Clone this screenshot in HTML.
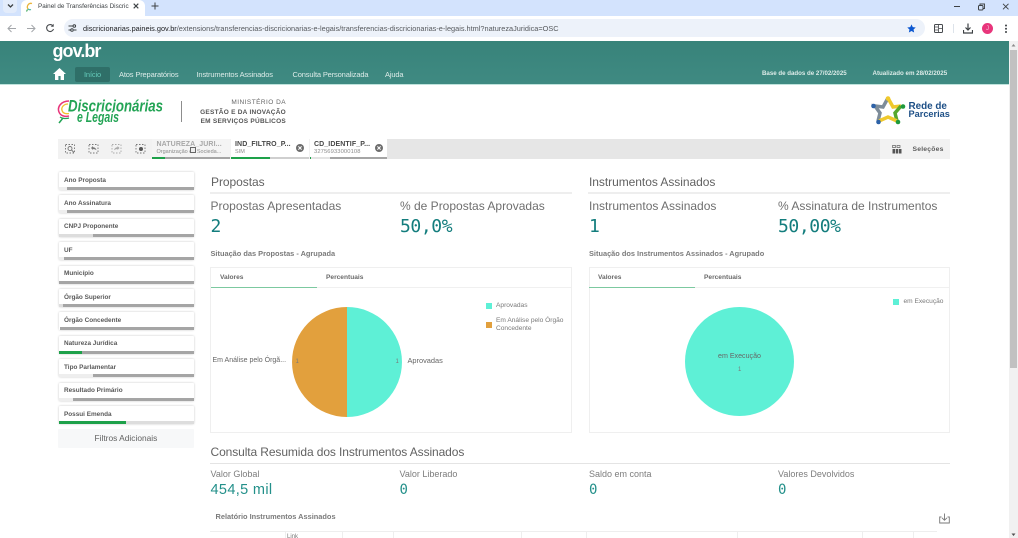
<!DOCTYPE html>
<html lang="pt-BR"><head><meta charset="utf-8"><title>Painel de Transferências Discricionárias</title>
<style>
html,body{margin:0;padding:0;background:#fff}
#p{position:relative;width:1018px;height:538px;overflow:hidden;background:#fff;font-family:"Liberation Sans",sans-serif}
#p div{position:absolute}
.t{position:absolute;white-space:nowrap;line-height:12px}
.nav{top:68.500px;color:#dcebe8;font-size:7.500px;letter-spacing:-.15px}
.fl{left:59px;width:134.500px;height:18px;background:#fff;box-shadow:0 0 2px rgba(0,0,0,.22);border-radius:1px}
.fl b{position:absolute;left:5px;top:2.500px;font-size:6.400px;line-height:11px;color:#595959;white-space:nowrap}
.bar{position:absolute;left:0;bottom:0;height:3px;width:100%;overflow:hidden}
.bar i{position:absolute;top:0;bottom:0;display:block}
.h2{font-size:12px;color:#626262;letter-spacing:-.05px;line-height:14px}
.hr{height:2px;background:#eee}
.kl{font-size:12px;color:#6f6f6f;line-height:14px}
.kv{font-family:"DejaVu Sans Mono",monospace;font-size:18px;letter-spacing:-.4px;color:#137d7d;line-height:24px}
.sub{font-size:7.400px;font-weight:bold;color:#7b7b7b;line-height:10px}
.panel{box-sizing:border-box;border:1px solid #efefef;background:#fff}
.tab{font-size:6.600px;font-weight:bold;color:#6a6a6a;line-height:10px}
.sm{font-size:6.600px;color:#7a7a7a;line-height:10px}
.vl{font-size:9px;color:#7d7d7d;line-height:12px}
.vv{font-family:"DejaVu Sans Mono",monospace;font-size:14px;color:#23908a;line-height:18px}
.vline{top:531px;height:7px;width:1px;background:#eee}
.ct{font-size:7px;font-weight:bold;color:#484848;letter-spacing:.1px;line-height:10px}
.cb{font-size:5.500px;color:#8a8a8a;line-height:8px}
</style></head><body><div id="p">

<!-- browser chrome -->
<div style="left:0;top:0;width:1018px;height:16px;background:#d3e3fd"></div>
<div style="left:3px;top:0;width:14px;height:13px;background:#e3ecfb;border-radius:0 0 4px 4px"></div>
<svg style="position:absolute;left:7px;top:3px" width="7" height="6" viewBox="0 0 7 6"><path d="M1 1.500 3.500 4 6 1.500" fill="none" stroke="#3c4043" stroke-width="1.300"/></svg>
<div style="left:21px;top:0;width:124px;height:17px;background:#fff;border-radius:6px 6px 0 0"></div>
<svg style="position:absolute;left:25px;top:2px" width="9" height="10" viewBox="0 0 9 10"><path d="M7 1.500A3.600 3.600 0 0 0 3 7" fill="none" stroke="#e9b53c" stroke-width="1.300"/><path d="M3 7A3 3 0 0 0 6 7.500" fill="none" stroke="#4db6a2" stroke-width="1.200"/><path d="M2.500 7.500 1.500 9.500" stroke="#45a860" stroke-width="1.200"/></svg>
<span class="t" style="left:38px;top:.500px;font-size:6.350px;color:#3c4043">Painel de Transferências Discric</span>
<svg style="position:absolute;left:133px;top:3px" width="6" height="6" viewBox="0 0 6 6"><path d="M.7.700 5.300 5.300M5.300.700.700 5.300" stroke="#3c4043" stroke-width="1.100"/></svg>
<svg style="position:absolute;left:151px;top:2px" width="8" height="8" viewBox="0 0 8 8"><path d="M4 .5v7M.5 4h7" stroke="#3c4043" stroke-width="1"/></svg>
<div style="left:0;top:16px;width:1018px;height:25px;background:#fff"></div>
<svg style="position:absolute;left:7px;top:24px" width="10" height="9" viewBox="0 0 10 9"><path d="M9 4.500H1.500M4.500 1 1 4.500 4.500 8" fill="none" stroke="#a3a6aa" stroke-width="1"/></svg>
<svg style="position:absolute;left:26px;top:24px" width="10" height="9" viewBox="0 0 10 9"><path d="M1 4.500h7.500M5.500 1 9 4.500 5.500 8" fill="none" stroke="#a3a6aa" stroke-width="1"/></svg>
<svg style="position:absolute;left:45px;top:23px" width="10" height="10" viewBox="0 0 10 10"><path d="M8 3A3.500 3.500 0 1 0 8.500 6" fill="none" stroke="#474a4e" stroke-width="1.100"/><path d="M8.700 .8V3.700H5.800z" fill="#474a4e"/></svg>
<div style="left:64px;top:19px;width:861px;height:18px;background:#edf2fa;border-radius:9px"></div>
<svg style="position:absolute;left:68px;top:24px" width="9" height="8" viewBox="0 0 9 8"><path d="M.5 2h4M.5 6h2M6 6h2.500" stroke="#3c4043" stroke-width="1"/><circle cx="6.300" cy="2" r="1.300" fill="none" stroke="#3c4043"/><circle cx="4" cy="6" r="1.300" fill="none" stroke="#3c4043"/></svg>
<span class="t" style="left:83px;top:22.500px;font-size:7.350px;color:#575a5e"><span style="color:#202124">discricionarias.paineis.gov.br</span>/extensions/transferencias-discricionarias-e-legais/transferencias-discricionarias-e-legais.html?naturezaJuridica=OSC</span>
<svg style="position:absolute;left:907px;top:24px" width="9" height="9" viewBox="0 0 24 24"><path d="M12 1l3.400 7.300 7.900.9-5.900 5.400 1.700 7.900L12 18.500l-7.100 4 1.700-7.900L.7 9.200l7.900-.9z" fill="#0b57d0"/></svg>
<svg style="position:absolute;left:934px;top:24px" width="9" height="9" viewBox="0 0 9 9"><rect x=".5" y=".5" width="8" height="8" rx="1" fill="none" stroke="#474a4e"/><path d="M4.500.5v8M.5 3h4M.5 6h4M4.500 4.500h4" stroke="#474a4e" stroke-width=".8"/></svg>
<div style="left:953px;top:24px;width:1px;height:9px;background:#dde3ea"></div>
<svg style="position:absolute;left:963px;top:23px" width="10" height="11" viewBox="0 0 10 11"><path d="M5 .5v6M2.500 4.500 5 7l2.500-2.500" fill="none" stroke="#3c4043" stroke-width="1.200"/><path d="M.5 7v3h9V7" fill="none" stroke="#3c4043" stroke-width="1.200"/></svg>
<div style="left:982px;top:23px;width:11px;height:11px;background:#e8357b;border-radius:50%"></div>
<span class="t" style="left:986px;top:23px;font-size:6px;color:#f7c3d8">J</span>
<svg style="position:absolute;left:1004px;top:24px" width="4" height="10" viewBox="0 0 4 10"><circle cx="2" cy="1.500" r="1" fill="#3c4043"/><circle cx="2" cy="4.700" r="1" fill="#3c4043"/><circle cx="2" cy="8" r="1" fill="#3c4043"/></svg>
<svg style="position:absolute;left:953px;top:3px" width="60" height="8" viewBox="0 0 60 8"><path d="M1 3.500H7" stroke="#3c4043"/><rect x="25.500" y="2.500" width="4.500" height="4.500" rx="1" fill="none" stroke="#3c4043"/><path d="M27 2V1h4.500v4.500h-1" fill="none" stroke="#3c4043" stroke-width=".9"/><path d="M50 .8 55.500 6.300M55.500.8 50 6.300" stroke="#3c4043" stroke-width=".9"/></svg>

<!-- header -->
<div style="left:0;top:41px;width:1009px;height:43px;background:linear-gradient(#38837a,#3f8a82)"></div>
<div style="left:0;top:84px;width:1009px;height:1px;background:#bfe3dc"></div>
<span class="t" style="left:52.500px;top:41px;font-size:18px;line-height:20px;font-weight:bold;color:#fff;letter-spacing:-.95px">gov.br</span>
<svg style="position:absolute;left:53px;top:68px" width="13" height="12" viewBox="0 0 13 12"><path d="M6.500 0 0 6h2v6h3.400V8h2.200v4H11V6h2z" fill="#fff"/></svg>
<div style="left:75px;top:66.500px;width:35px;height:15.500px;background:#2f6f68;border-radius:2px"></div>
<span class="t nav" style="left:84px;color:#63c9b8">Início</span>
<span class="t nav" style="left:119px">Atos Preparatórios</span>
<span class="t nav" style="left:196.500px">Instrumentos Assinados</span>
<span class="t nav" style="left:292.500px">Consulta Personalizada</span>
<span class="t nav" style="left:385px">Ajuda</span>
<span class="t" style="left:762px;top:68px;font-size:6.150px;font-weight:bold;color:#dcebe8">Base de dados de 27/02/2025</span>
<span class="t" style="left:872.500px;top:68px;font-size:6.200px;font-weight:bold;color:#dcebe8">Atualizado em 28/02/2025</span>

<!-- scrollbar -->
<div style="left:1009px;top:41px;width:9px;height:497px;background:#f1f1f1"></div>
<div style="left:1010px;top:50px;width:7px;height:318px;background:#c1c1c1"></div>
<svg style="position:absolute;left:1011px;top:43px" width="5" height="4"><path d="M2.500 1 4.500 3.500H.5z" fill="#8a8a8a"/></svg>
<svg style="position:absolute;left:1011px;top:533px" width="5" height="4"><path d="M2.500 3 4.500.5H.5z" fill="#505050"/></svg>

<!-- logos -->
<svg style="position:absolute;left:57px;top:97px" width="110" height="30" viewBox="0 0 110 30">
<path d="M12 4C4 4 0 10 2 15c1.500 4 6 5 10 4" fill="none" stroke="#e8357b" stroke-width="1.500"/>
<path d="M11 7C7 7 4 10 5 13.500c1 3 4 3.500 7 3" fill="none" stroke="#f0c22e" stroke-width="1.300"/>
<path d="M3 20c2 1.500 6 2 9 1" fill="none" stroke="#23a455" stroke-width="1.300"/>
<path d="M2 26 6 21" stroke="#23a455" stroke-width="1.500"/>
<text x="11" y="14.500" font-family="Liberation Sans" font-style="italic" font-weight="bold" font-size="16.500" fill="#23a455" textLength="95" lengthAdjust="spacingAndGlyphs">Discricionárias</text>
<text x="20" y="25" font-family="Liberation Sans" font-style="italic" font-weight="bold" font-size="15" fill="#23a455" textLength="42" lengthAdjust="spacingAndGlyphs">e Legais</text>
</svg>
<div style="left:181px;top:101px;width:1px;height:21px;background:#8d8d8d"></div>
<span class="t" style="right:732px;top:98px;font-size:6.500px;line-height:10px;color:#666;letter-spacing:.45px">MINISTÉRIO DA</span>
<span class="t" style="right:732px;top:107.500px;font-size:6.500px;line-height:10px;font-weight:bold;color:#555;letter-spacing:.25px">GESTÃO E DA INOVAÇÃO</span>
<span class="t" style="right:732px;top:116.500px;font-size:6.500px;line-height:10px;font-weight:bold;color:#555;letter-spacing:.25px">EM SERVIÇOS PÚBLICOS</span>

<svg style="position:absolute;left:871px;top:95px" width="36" height="30" viewBox="0 0 36 30">
<path d="M17 3 12 12 4 11 9 18 7 26" fill="none" stroke="#7d8c99" stroke-width="3.500"/>
<path d="M17 3 22 12 30 11" fill="none" stroke="#f0c92c" stroke-width="3.500"/>
<path d="M30 11 24 18 26 26" fill="none" stroke="#57a82c" stroke-width="3.500"/>
<path d="M26 26 17 22 8 26" fill="none" stroke="#f0c92c" stroke-width="3.500"/>
<circle cx="17" cy="3.500" r="2.300" fill="#f0c92c"/><circle cx="32" cy="11.500" r="2.300" fill="#1f9a3b"/><circle cx="27" cy="27" r="2.300" fill="#1f9a3b"/><circle cx="7.500" cy="27" r="2.300" fill="#2d62a8"/><circle cx="2.500" cy="11" r="2.300" fill="#2d62a8"/>
</svg>
<span class="t" style="left:908.500px;top:100.500px;font-size:9.900px;line-height:11px;font-weight:bold;color:#1d4f86">Rede de</span>
<span class="t" style="left:908.500px;top:108.500px;font-size:9.200px;line-height:11px;font-weight:bold;color:#1d4f86">Parcerias</span>

<!-- selection bar -->
<div style="left:58px;top:139px;width:329px;height:20px;background:#f2f2f2"></div>
<div style="left:387px;top:139px;width:493px;height:20px;background:#e6e6e6"></div>
<div style="left:880px;top:139px;width:70px;height:20px;background:#f2f2f2"></div>
<svg style="position:absolute;left:65px;top:143px" width="84" height="12" viewBox="0 0 84 12" fill="none" stroke="#777" stroke-width=".9">
<rect x=".5" y="1.500" width="9" height="8.500" stroke-dasharray="1.500 1.500"/><circle cx="5" cy="5.500" r="2"/><path d="M6.500 7 9 9.500"/>
<rect x="24" y="1.500" width="9" height="8.500" stroke-dasharray="1.500 1.500"/><path d="M26 5l2-2v1.300c2 0 3 1.200 3.500 3-1-1-2-1.200-3.500-1.200V7z" fill="#777" stroke="none"/>
<rect x="47" y="1.500" width="9" height="8.500" stroke-dasharray="1.500 1.500" stroke="#aaa"/><path d="M54.500 5l-2-2v1.300c-2 0-3 1.200-3.500 3 1-1 2-1.200 3.500-1.200V7z" fill="#aaa" stroke="none"/>
<rect x="71" y="1.500" width="9" height="8.500" stroke-dasharray="1.500 1.500"/><circle cx="76" cy="6" r="2" fill="#555" stroke="none"/>
</svg>
<!-- chips -->
<div style="left:152px;top:139px;width:78px;height:20px;background:#f4f4f4"></div>
<div style="left:231px;top:139px;width:78px;height:20px;background:#fff"></div>
<div style="left:310px;top:139px;width:77px;height:20px;background:#fff"></div>
<span class="t ct" style="left:156.500px;top:140px;color:#a8a8a8">NATUREZA_JURI...</span>
<span class="t cb" style="left:156.500px;top:147.500px">Organização da Socieda...</span>
<div style="left:189.500px;top:147px;width:6px;height:6px;border:1px solid #666;box-sizing:border-box;background:#eee"></div>
<span class="t ct" style="left:235px;top:140px">IND_FILTRO_P...</span>
<span class="t cb" style="left:235px;top:147.500px">SIM</span>
<span class="t ct" style="left:314px;top:140px">CD_IDENTIF_P...</span>
<span class="t cb" style="left:314px;top:147.500px;letter-spacing:.1px;font-size:5.800px">32756933000108</span>
<svg style="position:absolute;left:296px;top:143.500px" width="8" height="8" viewBox="0 0 8 8"><circle cx="4" cy="4" r="4" fill="#6d6d6d"/><path d="M2.400 2.400 5.600 5.600M5.600 2.400 2.400 5.600" stroke="#fff"/></svg>
<svg style="position:absolute;left:375px;top:143.500px" width="8" height="8" viewBox="0 0 8 8"><circle cx="4" cy="4" r="4" fill="#6d6d6d"/><path d="M2.400 2.400 5.600 5.600M5.600 2.400 2.400 5.600" stroke="#fff"/></svg>
<div style="left:152px;top:157px;width:78px;height:2px;background:#a5a5a5"><div style="left:0;top:0;width:13px;height:2px;background:#1ea14a"></div></div>
<div style="left:231px;top:157px;width:78px;height:2px;background:#cfcfcf"><div style="left:0;top:0;width:39px;height:2px;background:#1ea14a"></div></div>
<div style="left:310px;top:157px;width:77px;height:2px;background:#e4e4e4"><div style="left:0;top:0;width:1px;height:2px;background:#1ea14a"></div><div style="left:20px;top:0;width:57px;height:2px;background:#a5a5a5"></div></div>
<svg style="position:absolute;left:892px;top:145px" width="10" height="9" viewBox="0 0 10 9"><path d="M.5.500h3v2h-3zM5 .5h3v2H5z" fill="none" stroke="#666" stroke-width=".7"/><path d="M.5 4h9v4.500h-9z" fill="#555"/><path d="M3.500 4v4.500M6.500 4v4.500" stroke="#f2f2f2" stroke-width=".7"/></svg>
<span class="t" style="left:912.500px;top:143.500px;font-size:6.800px;font-weight:bold;color:#5d5d5d;letter-spacing:.2px">Seleções</span>

<!-- filters -->
<div class="fl" style="top:172px"><b>Ano Proposta</b><span class="bar"><i style="left:0;width:8px;background:#eee"></i><i style="left:8px;right:0;background:#a5a5a5"></i></span></div>
<div class="fl" style="top:195.400px"><b>Ano Assinatura</b><span class="bar"><i style="left:0;width:8px;background:#eee"></i><i style="left:8px;right:0;background:#a5a5a5"></i></span></div>
<div class="fl" style="top:218.800px"><b>CNPJ Proponente</b><span class="bar"><i style="left:0;width:34px;background:#ddd"></i><i style="left:34px;right:0;background:#a5a5a5"></i></span></div>
<div class="fl" style="top:242.200px"><b>UF</b><span class="bar"><i style="left:0;width:5px;background:#eee"></i><i style="left:5px;right:0;background:#a5a5a5"></i></span></div>
<div class="fl" style="top:265.600px"><b>Município</b><span class="bar"><i style="left:0;right:0;background:#a5a5a5"></i></span></div>
<div class="fl" style="top:289px"><b>Órgão Superior</b><span class="bar"><i style="left:0;width:4px;background:#ddd"></i><i style="left:4px;right:0;background:#a5a5a5"></i></span></div>
<div class="fl" style="top:312.400px"><b>Órgão Concedente</b><span class="bar"><i style="left:1px;right:0;background:#a5a5a5"></i></span></div>
<div class="fl" style="top:335.800px"><b>Natureza Jurídica</b><span class="bar"><i style="left:0;width:23px;background:#1ea14a"></i><i style="left:23px;right:0;background:#a5a5a5"></i></span></div>
<div class="fl" style="top:359.200px"><b>Tipo Parlamentar</b><span class="bar"><i style="left:0;width:34px;background:#eee"></i><i style="left:34px;right:0;background:#a5a5a5"></i></span></div>
<div class="fl" style="top:382.600px"><b>Resultado Primário</b><span class="bar"><i style="left:0;width:14px;background:#eee"></i><i style="left:14px;right:0;background:#a5a5a5"></i></span></div>
<div class="fl" style="top:406px"><b>Possui Emenda</b><span class="bar"><i style="left:0;width:67px;background:#1ea14a"></i><i style="left:67px;right:0;background:#ddd"></i></span></div>
<div style="left:58px;top:429px;width:136px;height:19px;background:#f7f8f9;border-radius:1px"></div>
<span class="t" style="left:94.500px;top:432px;font-size:8.400px;color:#626262">Filtros Adicionais</span>

<!-- propostas -->
<span class="t h2" style="left:211px;top:175px">Propostas</span>
<div class="hr" style="left:210px;top:192px;width:362px"></div>
<span class="t kl" style="left:210.500px;top:198.500px">Propostas Apresentadas</span>
<span class="t kl" style="left:400px;top:198.500px">% de Propostas Aprovadas</span>
<span class="t kv" style="left:210.500px;top:215px">2</span>
<span class="t kv" style="left:400px;top:215px">50,0%</span>
<span class="t sub" style="left:210.500px;top:248.500px">Situação das Propostas - Agrupada</span>
<div class="panel" style="left:210px;top:267px;width:362px;height:166px"></div>
<div style="left:211px;top:287px;width:360px;height:1px;background:#f0f0f0"></div>
<div style="left:211px;top:287px;width:106px;height:1px;background:#7cc9a0"></div>
<span class="t tab" style="left:220px;top:273px">Valores</span>
<span class="t tab" style="left:326px;top:273px">Percentuais</span>
<svg style="position:absolute;left:292px;top:306.500px" width="110" height="110" viewBox="0 0 110 110">
<path d="M55 0a55 55 0 0 1 0 110z" fill="#5ef0d6"/><path d="M55 0a55 55 0 0 0 0 110z" fill="#e2a03d"/></svg>
<span class="t sm" style="left:395.500px;top:356.500px;font-size:6px">1</span>
<span class="t sm" style="left:295.500px;top:356.500px;font-size:6px">1</span>
<span class="t" style="left:407.500px;top:356px;font-size:7.400px;color:#666;line-height:10px">Aprovadas</span>
<span class="t" style="left:212.500px;top:356px;font-size:7px;color:#666;line-height:10px">Em Análise pelo Órgã...</span>
<div style="left:486px;top:303px;width:6px;height:6px;background:#5ef0d6"></div>
<span class="t sm" style="left:496px;top:301px">Aprovadas</span>
<div style="left:486px;top:322px;width:6px;height:6px;background:#e2a03d"></div>
<span class="t sm" style="left:496px;top:316px">Em Análise pelo Órgão</span>
<span class="t sm" style="left:496px;top:324px">Concedente</span>

<!-- instrumentos -->
<span class="t h2" style="left:589px;top:175px">Instrumentos Assinados</span>
<div class="hr" style="left:588px;top:192px;width:362px"></div>
<span class="t kl" style="left:589px;top:198.500px">Instrumentos Assinados</span>
<span class="t kl" style="left:778px;top:198.500px">% Assinatura de Instrumentos</span>
<span class="t kv" style="left:589px;top:215px">1</span>
<span class="t kv" style="left:778px;top:215px">50,00%</span>
<span class="t sub" style="left:589px;top:248.500px">Situação dos Instrumentos Assinados - Agrupado</span>
<div class="panel" style="left:589px;top:267px;width:361px;height:166px"></div>
<div style="left:590px;top:287px;width:359px;height:1px;background:#f0f0f0"></div>
<div style="left:589px;top:287px;width:106px;height:1px;background:#7cc9a0"></div>
<span class="t tab" style="left:598px;top:273px">Valores</span>
<span class="t tab" style="left:704px;top:273px">Percentuais</span>
<div style="left:685px;top:307px;width:109px;height:109px;border-radius:50%;background:#5ef0d6"></div>
<span class="t" style="left:718px;top:351px;font-size:7.100px;color:#666;line-height:10px">em Execução</span>
<span class="t sm" style="left:738px;top:364.500px;font-size:6px">1</span>
<div style="left:893px;top:299px;width:6px;height:6px;background:#5ef0d6"></div>
<span class="t sm" style="left:903.500px;top:297px">em Execução</span>

<!-- consulta -->
<span class="t h2" style="left:210.500px;top:445px;letter-spacing:-.1px">Consulta Resumida dos Instrumentos Assinados</span>
<div style="left:210px;top:463px;width:740px;height:1px;background:#e4e4e4"></div>
<span class="t vl" style="left:210.500px;top:468px">Valor Global</span>
<span class="t vl" style="left:399.500px;top:468px">Valor Liberado</span>
<span class="t vl" style="left:589px;top:468px">Saldo em conta</span>
<span class="t vl" style="left:778px;top:468px">Valores Devolvidos</span>
<span class="t vv" style="left:210.500px;top:480.500px;font-family:'Liberation Sans',sans-serif;font-size:14.500px;letter-spacing:.35px">454,5 mil</span>
<span class="t vv" style="left:399.500px;top:480.500px">0</span>
<span class="t vv" style="left:589px;top:480.500px">0</span>
<span class="t vv" style="left:778px;top:480.500px">0</span>
<span class="t sub" style="left:215.500px;top:512px">Relatório Instrumentos Assinados</span>
<svg style="position:absolute;left:939px;top:513px" width="11" height="11" viewBox="0 0 11 11"><path d="M5.500.5v6.500M3 4.800 5.500 7.300 8 4.800" fill="none" stroke="#777" stroke-width=".9"/><path d="M2.500 4H.7v6h9.600V4H8.500" fill="none" stroke="#777" stroke-width=".9"/></svg>
<div style="left:210px;top:531px;width:727px;height:1px;background:#eee"></div>
<div class="vline" style="left:285px"></div><div class="vline" style="left:342px"></div><div class="vline" style="left:393px"></div><div class="vline" style="left:521px"></div><div class="vline" style="left:586px"></div><div class="vline" style="left:737px"></div><div class="vline" style="left:862px"></div><div class="vline" style="left:913px"></div>
<span class="t" style="left:287px;top:533px;font-size:6px;line-height:8px;color:#777">Link</span>
</div></body></html>
